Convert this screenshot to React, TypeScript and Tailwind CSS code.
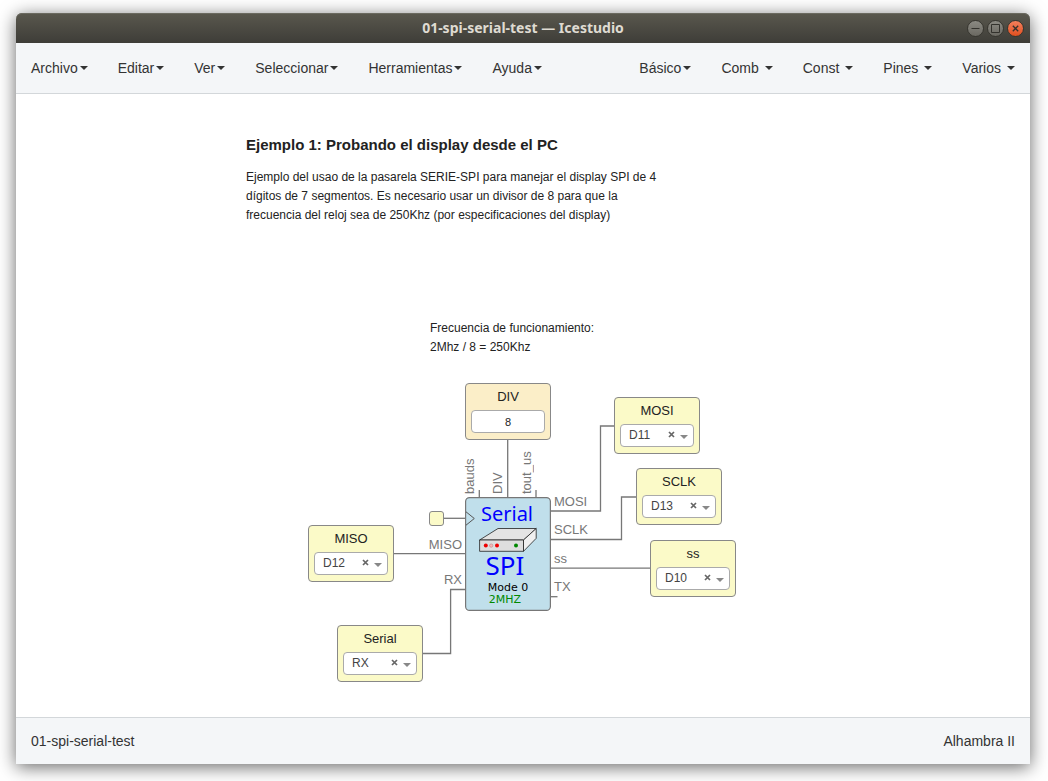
import React, { useState } from "react";

type MenuItem = { label: string; spaced?: boolean };

const mainMenu: MenuItem[] = [
  { label: "Archivo" },
  { label: "Editar" },
  { label: "Ver" },
  { label: "Seleccionar" },
  { label: "Herramientas" },
  { label: "Ayuda" },
];

const blockMenu: MenuItem[] = [
  { label: "Básico" },
  { label: "Comb", spaced: true },
  { label: "Const", spaced: true },
  { label: "Pines", spaced: true },
  { label: "Varios", spaced: true },
];

const pins = ["D13", "D12", "D11", "D10", "RX", "TX"];

const ioBlocks = [
  { id: "mosi", name: "MOSI", pin: "D11", place: "left-[598px] top-[303px]" },
  { id: "sclk", name: "SCLK", pin: "D13", place: "left-[620px] top-[374px]" },
  { id: "ss", name: "ss", pin: "D10", place: "left-[634px] top-[446px]" },
  { id: "miso", name: "MISO", pin: "D12", place: "left-[292px] top-[431px]" },
  { id: "serial", name: "Serial", pin: "RX", place: "left-[321px] top-[531px]" },
];

const sidePorts = [
  { name: "MOSI", place: "left-[538px] top-[398px]" },
  { name: "SCLK", place: "left-[538px] top-[426px]" },
  { name: "ss", place: "left-[538px] top-[455px]" },
  { name: "TX", place: "left-[538px] top-[483px]" },
  { name: "MISO", place: "left-[386px] top-[441px] w-[60px] text-right" },
  { name: "RX", place: "left-[386px] top-[476px] w-[60px] text-right" },
];

const topPorts = [
  { name: "bauds", place: "left-[444px] top-[340px]" },
  { name: "DIV", place: "left-[472px] top-[340px]" },
  { name: "tout_us", place: "left-[501px] top-[340px]" },
];

function Menu({ items }: { items: MenuItem[] }) {
  return (
    <ul className="flex">
      {items.map(({ label, spaced }) => (
        <li key={label}>
          <button type="button" className="flex h-[50px] items-center px-[15px]">
            {label}
            <span
              className={`h-0 w-0 border-x-4 border-t-4 border-x-transparent border-t-[#333] ${
                spaced ? "ml-[6px]" : "ml-[2px]"
              }`}
            />
          </button>
        </li>
      ))}
    </ul>
  );
}

function WindowButton({ label, close, children }: { label: string; close?: boolean; children: React.ReactNode }) {
  return (
    <button
      type="button"
      aria-label={label}
      className={`flex h-[17px] w-[17px] items-center justify-center rounded-full border border-[#36352f] bg-linear-to-b ${
        close ? "from-[#f37f5b] to-[#e04f1c]" : "from-[#8b8a83] to-[#6a6861]"
      }`}
    >
      <svg viewBox="0 0 15 15" className="h-[15px] w-[15px] shrink-0" fill="none" stroke="#33322d">
        {children}
      </svg>
    </button>
  );
}

function IoBlock({ id, name, pin, place }: (typeof ioBlocks)[number]) {
  const [value, setValue] = useState(pin);
  return (
    <div className={`absolute h-[57px] w-[86px] rounded-[4px] border border-[#888] bg-[#fbfac8] px-[5px] ${place}`}>
      <label htmlFor={id} className="block h-[26px] text-center text-[13px] leading-[26px]">
        {name}
      </label>
      <div className="relative">
        <select
          id={id}
          value={value}
          onChange={(e) => setValue(e.target.value)}
          className="block h-[23px] w-full appearance-none rounded-[4px] border border-[#aaa] bg-white pb-[1px] pl-[8px] text-[12px] text-[#444]"
        >
          <option value="" />
          {pins.map((p) => (
            <option key={p}>{p}</option>
          ))}
        </select>
        <button
          type="button"
          aria-label={`Quitar ${name}`}
          onClick={() => setValue("")}
          className="absolute top-[7px] right-[19px] h-[7px] w-[7px]"
        >
          <svg viewBox="0 0 7 7" className="h-[7px] w-[7px]" stroke="#666" strokeWidth="1.7">
            <path d="M1 1l5 5M6 1l-5 5" />
          </svg>
        </button>
        <span className="pointer-events-none absolute top-[11px] right-[6px] h-0 w-0 border-x-4 border-t-4 border-x-transparent border-t-[#888]" />
      </div>
    </div>
  );
}

function Wires() {
  return (
    <svg
      viewBox="16 94 740 600"
      className="absolute top-0 left-0 h-[600px] w-[740px]"
      fill="none"
      stroke="#777"
      strokeWidth="1.3"
    >
      <path d="M507.7 439V498" />
      <path d="M479.3 490V498M536 490V498" />
      <path d="M550 511H600.5V426H615" />
      <path d="M550 539.5H621.5V497H637" />
      <path d="M550 568.2H651" />
      <path d="M550 596.7H557.5" />
      <path d="M443 518.3H466" />
      <path d="M393 553.7H466" />
      <path d="M466 589.5H450.6V653.5H422" />
    </svg>
  );
}

function SpiBlock() {
  return (
    <svg
      viewBox="465 497 86 114"
      role="img"
      aria-label="Serial SPI"
      className="absolute top-[403px] left-[449px] h-[114px] w-[86px] font-['Noto_Sans',sans-serif]"
    >
      <rect x="465.6" y="497.6" width="84.8" height="112.8" rx="4" fill="#c0dfeb" stroke="#777" strokeWidth="1.2" />
      <path d="M466 511.8L474.3 518.5L466 525.2" fill="none" stroke="#555" />
      <text x="507" y="520.5" textAnchor="middle" fontSize="20" fill="#00f">Serial</text>
      <g stroke="#222" strokeWidth=".8" strokeLinejoin="round">
        <path d="M479.6 540L498 528.5H536.2L523.5 540Z" fill="#e4e4e4" />
        <path d="M523.5 540L536.2 528.5V538.3L523.5 551.3Z" fill="#f0f0f0" />
        <path d="M479.6 540H523.5V551.3H479.6Z" fill="#dedede" />
      </g>
      <circle cx="485.8" cy="545.6" r="2" fill="#e00" />
      <circle cx="491.2" cy="545.6" r="1.7" fill="#f7b5b5" stroke="#a66" strokeWidth=".4" />
      <circle cx="497" cy="545.6" r="2" fill="#e00" />
      <circle cx="516" cy="545.6" r="2" fill="#080" />
      <text x="505" y="574.5" textAnchor="middle" fontSize="26" fill="#00f">SPI</text>
      <g className="font-['DejaVu_Sans',sans-serif]" fontSize="11" textAnchor="middle">
        <text x="508" y="591" fill="#000">Mode 0</text>
        <text x="505" y="603" fill="#080">2MHZ</text>
      </g>
    </svg>
  );
}

export default function App() {
  const [div, setDiv] = useState("8");
  return (
    <div className="flex min-h-screen flex-col overflow-hidden bg-white pt-[13px] pr-[18px] pb-[17px] pl-[16px] font-['Liberation_Sans',Arial,sans-serif] text-[14px] text-[#333]">
      <div className="flex flex-1 flex-col rounded-t-[6px] bg-white shadow-[0_3px_18px_rgba(0,0,0,0.6)]">
        <header className="grid h-[30px] grid-cols-[1fr_auto_1fr] items-center rounded-t-[6px] bg-linear-to-b from-[#5a584e] to-[#3e3d38] shadow-[inset_0_1px_0_#6b6a60]">
          <h1 className="col-start-2 font-['Noto_Sans',sans-serif] text-[14px] leading-[20px] font-bold text-[#dfdbd2]">
            01-spi-serial-test — Icestudio
          </h1>
          <div className="flex justify-end gap-[3px] pr-[6px]">
            <WindowButton label="Minimizar">
              <path d="M3.5 7.5h8" />
            </WindowButton>
            <WindowButton label="Maximizar">
              <path d="M3.5 3.5h8v8h-8z" />
            </WindowButton>
            <WindowButton label="Cerrar" close>
              <path d="M4.8 4.8l5.4 5.4M10.2 4.8l-5.4 5.4" strokeWidth="1.3" />
            </WindowButton>
          </div>
        </header>

        <nav className="flex justify-between border-b border-[#d3d7da] bg-[#f4f6f8]">
          <Menu items={mainMenu} />
          <Menu items={blockMenu} />
        </nav>

        <main className="relative min-h-[610px] flex-1 text-[#222]">
          <section className="absolute top-[40px] left-[230px] w-[425px]">
            <h2 className="text-[15px] leading-[22px] font-bold">Ejemplo 1: Probando el display desde el PC</h2>
            <p className="mt-[12px] text-[12px] leading-[19px]">
              Ejemplo del usao de la pasarela SERIE-SPI para manejar el display SPI de 4
              <br />
              dígitos de 7 segmentos. Es necesario usar un divisor de 8 para que la
              <br />
              frecuencia del reloj sea de 250Khz (por especificaciones del display)
            </p>
          </section>
          <p className="absolute top-[225px] left-[414px] text-[12px] leading-[19px] whitespace-nowrap">
            Frecuencia de funcionamiento:
            <br />
            2Mhz / 8 = 250Khz
          </p>

          <Wires />

          <div className="absolute top-[289px] left-[449px] h-[57px] w-[86px] rounded-[4px] border border-[#888] bg-[#fbeec8] px-[5px]">
            <label htmlFor="div" className="block h-[26px] text-center text-[13px] leading-[26px]">
              DIV
            </label>
            <input
              id="div"
              value={div}
              onChange={(e) => setDiv(e.target.value)}
              className="block h-[23px] w-full rounded-[4px] border border-[#aaa] bg-white text-center text-[11px]"
            />
          </div>

          {ioBlocks.map((block) => (
            <IoBlock key={block.id} {...block} />
          ))}

          <div className="absolute top-[417px] left-[413px] h-[15px] w-[15px] rounded-[3px] border border-[#888] bg-[#fbfac8]" />

          <SpiBlock />

          {sidePorts.map(({ name, place }) => (
            <span key={name} className={`absolute text-[13px] leading-[19px] text-[#777] ${place}`}>
              {name}
            </span>
          ))}
          {topPorts.map(({ name, place }) => (
            <span
              key={name}
              className={`absolute h-[60px] rotate-180 text-[13px] leading-[19px] text-[#777] [writing-mode:vertical-rl] ${place}`}
            >
              {name}
            </span>
          ))}
        </main>

        <footer className="flex h-[47px] items-center justify-between border-t border-[#d3d7da] bg-[#f4f6f8] px-[15px]">
          <span>01-spi-serial-test</span>
          <span>Alhambra II</span>
        </footer>
      </div>
    </div>
  );
}
